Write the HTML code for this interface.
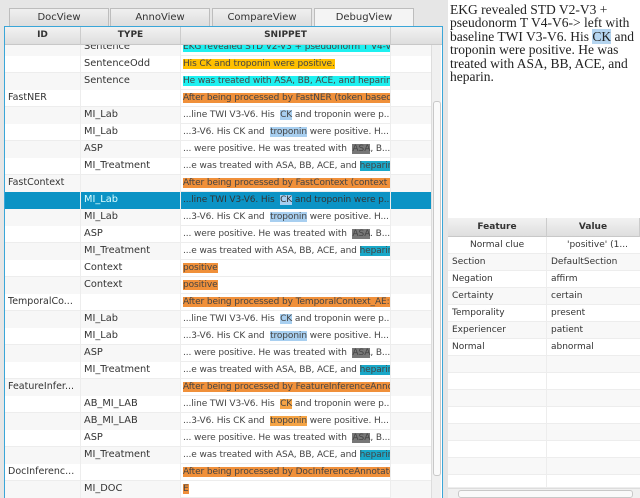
<!DOCTYPE html>
<html><head><meta charset="utf-8"><style>
*{margin:0;padding:0;box-sizing:border-box}
body{width:640px;height:498px;overflow:hidden;background:#e6e6e6;font-family:"DejaVu Sans","Liberation Sans",sans-serif;font-size:9px;color:#333;position:relative}
.tab{position:absolute;top:8px;height:19px;width:100px;background:linear-gradient(#f0f0f0,#dcdcdc);border:1px solid #bdbdbd;border-bottom:none;text-align:center;line-height:18px;font-size:10px;color:#333}
.tab.sel{background:#f4f4f4}
#tbl{position:absolute;left:4px;top:26px;width:439px;height:472px;border:1px solid #3aa6d8;border-bottom:none;background:#fff;overflow:hidden}
.hdr{position:absolute;top:0;left:0;height:18px;width:100%;background:linear-gradient(#f2f2f2,#dedede);border-bottom:1px solid #c8c8c8;font-weight:bold;font-size:9px;z-index:2}
.hdr div{position:absolute;top:0;height:18px;line-height:17px;text-align:center;border-right:1px solid #ccc}
.row{position:absolute;left:0;width:427px;height:17px;border-bottom:1px solid #ededed;line-height:16px;font-size:9px;white-space:nowrap}
.row>div{position:absolute;top:0;height:17px;overflow:hidden;border-right:1px solid #ededed}
.c1{left:0;width:76px;padding-left:3px;font-size:9.5px}
.c2{left:76px;width:100px;padding-left:3px;font-size:9.8px}
.c3{left:176px;width:210px;padding-left:2px;color:#444;letter-spacing:-0.1px}
.c4{left:386px;width:41px}
.alt .c1,.alt .c2,.alt .c4{background:#f7f7f7}
.sel .c1,.sel .c2,.sel .c3,.sel .c4{background:#0b93c5;color:#dff}
.sel .c3{color:#333}
.cy{background:#1ef0f0}.ye{background:#ffc000}.or{background:#f0903a}
.lb{background:#a8cff0}.dk{background:#777}.tl{background:#1aa8c8}.lo{background:#f5a445}
#vs{position:absolute;left:431px;top:44px;width:10px;height:454px;background:#f0f0f0;border-left:1px solid #ddd}
#vs .th{position:absolute;left:1px;top:57px;width:8px;height:375px;background:#fafafa;border:1px solid #c8c8c8;border-radius:3px}
#right{position:absolute;left:448px;top:0;width:192px;height:498px;background:#fff}
#txt{position:absolute;left:2px;top:3px;width:190px;font-family:"Liberation Serif","DejaVu Serif",serif;font-size:13.5px;line-height:13.4px;color:#222}
#rt{position:absolute;left:0;top:218px;width:192px;height:270px}
.rh{position:absolute;top:0;height:19px;background:linear-gradient(#f2f2f2,#dedede);border-bottom:1px solid #c8c8c8;font-weight:bold;text-align:center;line-height:18px;border-right:1px solid #ccc}
.rr{position:absolute;left:0;width:192px;height:17px;border-bottom:1px solid #ededed;line-height:16px}
.rr div{position:absolute;top:0;height:17px;padding-left:4px;overflow:hidden;white-space:nowrap}
.rr .a{left:0;width:99px;border-right:1px solid #ededed}.rr .b{left:99px;width:93px}
.rr.alt{background:#f8f8f8}
#hs{position:absolute;left:0;top:488px;width:192px;height:10px;background:#f0f0f0;border-top:1px solid #ddd}
#hs .th{position:absolute;left:10px;top:1px;width:175px;height:8px;background:#fafafa;border:1px solid #c8c8c8;border-radius:3px}
</style></head><body>
<div class="tab" style="left:9px">DocView</div>
<div class="tab" style="left:110px">AnnoView</div>
<div class="tab" style="left:212px">CompareView</div>
<div class="tab sel" style="left:314px">DebugView</div>
<div id="tbl">
<div class="hdr"><div style="left:0;width:76px">ID</div><div style="left:76px;width:100px">TYPE</div><div style="left:176px;width:210px">SNIPPET</div><div style="left:386px;width:53px;border:none"></div></div>
<div class="row alt" style="top:12px"><div class="c1"></div><div class="c2">Sentence</div><div class="c3"><span class="cy">EKG revealed STD V2-V3 + pseudonorm T V4-V6-&gt; left</span></div><div class="c4"></div></div>
<div class="row" style="top:29px"><div class="c1"></div><div class="c2">SentenceOdd</div><div class="c3"><span class="ye">His CK and troponin were positive.</span></div><div class="c4"></div></div>
<div class="row alt" style="top:46px"><div class="c1"></div><div class="c2">Sentence</div><div class="c3"><span class="cy">He was treated with ASA, BB, ACE, and heparin.</span></div><div class="c4"></div></div>
<div class="row" style="top:63px"><div class="c1">FastNER</div><div class="c2"></div><div class="c3"><span class="or">After being processed by FastNER (token based rule</span></div><div class="c4"></div></div>
<div class="row alt" style="top:80px"><div class="c1"></div><div class="c2">MI_Lab</div><div class="c3">...line TWI V3-V6. His &nbsp;<span class="lb">CK</span> and troponin were p...</div><div class="c4"></div></div>
<div class="row" style="top:97px"><div class="c1"></div><div class="c2">MI_Lab</div><div class="c3">...3-V6. His CK and &nbsp;<span class="lb">troponin</span> were positive. H...</div><div class="c4"></div></div>
<div class="row alt" style="top:114px"><div class="c1"></div><div class="c2">ASP</div><div class="c3">... were positive. He was treated with &nbsp;<span class="dk">ASA</span>, B...</div><div class="c4"></div></div>
<div class="row" style="top:131px"><div class="c1"></div><div class="c2">MI_Treatment</div><div class="c3">...e was treated with ASA, BB, ACE, and <span class="tl">heparin</span>.</div><div class="c4"></div></div>
<div class="row alt" style="top:148px"><div class="c1">FastContext</div><div class="c2"></div><div class="c3"><span class="or">After being processed by FastContext (context detec</span></div><div class="c4"></div></div>
<div class="row sel" style="top:165px"><div class="c1"></div><div class="c2">MI_Lab</div><div class="c3">...line TWI V3-V6. His &nbsp;<span class="lb">CK</span> and troponin were p...</div><div class="c4"></div></div>
<div class="row alt" style="top:182px"><div class="c1"></div><div class="c2">MI_Lab</div><div class="c3">...3-V6. His CK and &nbsp;<span class="lb">troponin</span> were positive. H...</div><div class="c4"></div></div>
<div class="row" style="top:199px"><div class="c1"></div><div class="c2">ASP</div><div class="c3">... were positive. He was treated with &nbsp;<span class="dk">ASA</span>. B...</div><div class="c4"></div></div>
<div class="row alt" style="top:216px"><div class="c1"></div><div class="c2">MI_Treatment</div><div class="c3">...e was treated with ASA, BB, ACE, and <span class="tl">heparin</span>.</div><div class="c4"></div></div>
<div class="row" style="top:233px"><div class="c1"></div><div class="c2">Context</div><div class="c3"><span class="or">positive</span></div><div class="c4"></div></div>
<div class="row alt" style="top:250px"><div class="c1"></div><div class="c2">Context</div><div class="c3"><span class="or">positive</span></div><div class="c4"></div></div>
<div class="row" style="top:267px"><div class="c1">TemporalCo...</div><div class="c2"></div><div class="c3"><span class="or">After being processed by TemporalContext_AE:</span></div><div class="c4"></div></div>
<div class="row alt" style="top:284px"><div class="c1"></div><div class="c2">MI_Lab</div><div class="c3">...line TWI V3-V6. His &nbsp;<span class="lb">CK</span> and troponin were p...</div><div class="c4"></div></div>
<div class="row" style="top:301px"><div class="c1"></div><div class="c2">MI_Lab</div><div class="c3">...3-V6. His CK and &nbsp;<span class="lb">troponin</span> were positive. H...</div><div class="c4"></div></div>
<div class="row alt" style="top:318px"><div class="c1"></div><div class="c2">ASP</div><div class="c3">... were positive. He was treated with &nbsp;<span class="dk">ASA</span>, B...</div><div class="c4"></div></div>
<div class="row" style="top:335px"><div class="c1"></div><div class="c2">MI_Treatment</div><div class="c3">...e was treated with ASA, BB, ACE, and <span class="tl">heparin</span>.</div><div class="c4"></div></div>
<div class="row alt" style="top:352px"><div class="c1">FeatureInfer...</div><div class="c2"></div><div class="c3"><span class="or">After being processed by FeatureInferenceAnnotator</span></div><div class="c4"></div></div>
<div class="row" style="top:369px"><div class="c1"></div><div class="c2">AB_MI_LAB</div><div class="c3">...line TWI V3-V6. His &nbsp;<span class="lo">CK</span> and troponin were p...</div><div class="c4"></div></div>
<div class="row alt" style="top:386px"><div class="c1"></div><div class="c2">AB_MI_LAB</div><div class="c3">...3-V6. His CK and &nbsp;<span class="lo">troponin</span> were positive. H...</div><div class="c4"></div></div>
<div class="row" style="top:403px"><div class="c1"></div><div class="c2">ASP</div><div class="c3">... were positive. He was treated with &nbsp;<span class="dk">ASA</span>, B...</div><div class="c4"></div></div>
<div class="row alt" style="top:420px"><div class="c1"></div><div class="c2">MI_Treatment</div><div class="c3">...e was treated with ASA, BB, ACE, and <span class="tl">heparin</span>.</div><div class="c4"></div></div>
<div class="row" style="top:437px"><div class="c1">DocInferenc...</div><div class="c2"></div><div class="c3"><span class="or">After being processed by DocInferenceAnnotator</span></div><div class="c4"></div></div>
<div class="row alt" style="top:454px"><div class="c1"></div><div class="c2">MI_DOC</div><div class="c3"><span class="or">E</span></div><div class="c4"></div></div>
</div>
<div id="vs"><div class="th"></div></div>
<div id="right">
<div id="txt">EKG revealed STD V2-V3 + pseudonorm T V4-V6-&gt; left with baseline TWI V3-V6. His <span style="background:#b5d5f0">CK</span> and troponin were positive. He was treated with ASA, BB, ACE, and heparin.</div>
<div id="rt">
<div class="rh" style="left:0;width:99px">Feature</div><div class="rh" style="left:99px;width:93px">Value</div>
<div class="rr" style="top:19px"><div class="a" style="padding-left:22px">Normal clue</div><div class="b" style="padding-left:20px">'positive' (1...</div></div>
<div class="rr alt" style="top:36px"><div class="a">Section</div><div class="b">DefaultSection</div></div>
<div class="rr" style="top:53px"><div class="a">Negation</div><div class="b">affirm</div></div>
<div class="rr alt" style="top:70px"><div class="a">Certainty</div><div class="b">certain</div></div>
<div class="rr" style="top:87px"><div class="a">Temporality</div><div class="b">present</div></div>
<div class="rr alt" style="top:104px"><div class="a">Experiencer</div><div class="b">patient</div></div>
<div class="rr" style="top:121px"><div class="a">Normal</div><div class="b">abnormal</div></div>
<div class="rr alt" style="top:138px"><div class="a"></div><div class="b"></div></div>
<div class="rr" style="top:155px"><div class="a"></div><div class="b"></div></div>
<div class="rr alt" style="top:172px"><div class="a"></div><div class="b"></div></div>
<div class="rr" style="top:189px"><div class="a"></div><div class="b"></div></div>
<div class="rr alt" style="top:206px"><div class="a"></div><div class="b"></div></div>
<div class="rr" style="top:223px"><div class="a"></div><div class="b"></div></div>
<div class="rr alt" style="top:240px"><div class="a"></div><div class="b"></div></div>
<div class="rr" style="top:257px;height:13px"><div class="a"></div><div class="b"></div></div>
</div>
<div id="hs"><div class="th"></div></div>
</div>
</body></html>
